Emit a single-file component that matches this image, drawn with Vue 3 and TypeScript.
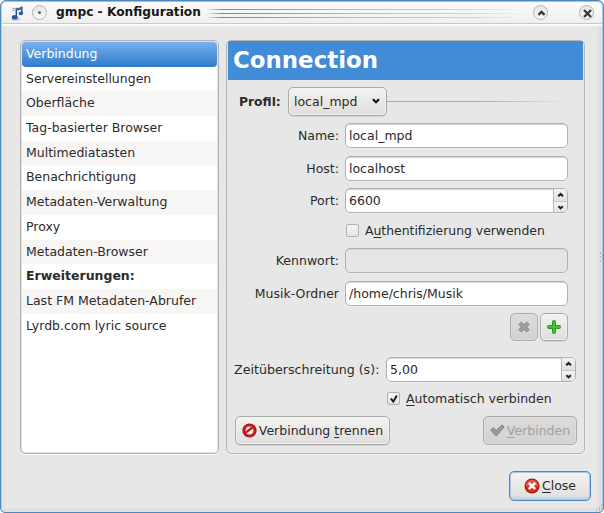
<script setup lang="ts">
import { reactive, ref } from 'vue'

interface Section {
  title: string
  heading?: boolean
}

const sections: Section[] = [
  { title: 'Verbindung' },
  { title: 'Servereinstellungen' },
  { title: 'Oberfläche' },
  { title: 'Tag-basierter Browser' },
  { title: 'Multimediatasten' },
  { title: 'Benachrichtigung' },
  { title: 'Metadaten-Verwaltung' },
  { title: 'Proxy' },
  { title: 'Metadaten-Browser' },
  { title: 'Erweiterungen:', heading: true },
  { title: 'Last FM Metadaten-Abrufer' },
  { title: 'Lyrdb.com lyric source' },
]

const selected = ref(0)
const profile = reactive({
  name: 'local_mpd',
  host: 'localhost',
  port: '6600',
  authenticate: false,
  password: '',
  folder: '/home/chris/Musik',
  timeout: '5,00',
  autoconnect: true,
})

function select(index: number) {
  if (!sections[index].heading) selected.value = index
}
</script>

<template>
  <div class="window">
    <header class="titlebar">
      <svg class="note" width="14" height="16" viewBox="0 0 14 16">
        <ellipse cx="4.5" cy="14.3" rx="4.3" ry="1.3" fill="#b9bfc8" />
        <path d="M5.3 12.5V3.2M10.8 8V2" fill="none" stroke="#294c80" stroke-width="1.4" />
        <path d="M4.7 2.6q3.2 1.2 6.6-1.9v3q-3.4 2.6-6.6 1.4z" fill="#3c68a3" />
        <path d="M.8 3.2l3 .5M1.2 5.4h2.6" stroke="#8fa6c6" />
        <ellipse cx="3.8" cy="12.3" rx="2.9" ry="2.2" fill="#2c5697" />
        <ellipse cx="9.9" cy="8.4" rx="2.2" ry="1.8" fill="#2c5697" />
      </svg>
      <span class="round menu"><i></i></span>
      <span class="caption">gmpc - Konfiguration</span>
      <span class="stripes"><i></i><i></i><i></i></span>
      <span class="round shade">
        <svg width="15" height="15" viewBox="0 0 15 15"><path d="M4.4 8.8l3.1-3 3.1 3" /></svg>
      </span>
      <span class="round">
        <svg width="15" height="15" viewBox="0 0 15 15"><path d="M4 4l7 7m0-7l-7 7" /></svg>
      </span>
    </header>

    <main class="content">
      <ul class="list">
        <li
          v-for="(section, index) in sections"
          :key="section.title"
          :class="{ active: index === selected, heading: section.heading }"
          @click="select(index)"
        ><span>{{ section.title }}</span></li>
      </ul>

      <section class="panel">
        <h1>Connection</h1>
        <div class="row profile">
          <b>Profil:</b>
          <button class="button combo">
            <span>local_mpd</span>
            <svg width="8" height="6" viewBox="0 0 8 6"><path d="M1 1.2l3 3 3-3" /></svg>
          </button>
          <i class="rule"></i>
        </div>

        <div class="form">
          <label for="name">Name:</label>
          <input id="name" v-model="profile.name" class="field" />
          <label for="host">Host:</label>
          <input id="host" v-model="profile.host" class="field" />
          <label for="port">Port:</label>
          <div class="spin">
            <input id="port" v-model="profile.port" class="field" />
            <div class="steps">
              <svg viewBox="0 0 13 12"><path d="M4.2 7.3l2.4-2.2L9 7.3" /></svg>
              <svg viewBox="0 0 13 12"><path d="M4.2 4.7l2.4 2.2L9 4.7" /></svg>
            </div>
          </div>
          <span></span>
          <div class="check auth" @click="profile.authenticate = !profile.authenticate">
            <span class="box">
              <svg v-if="profile.authenticate" viewBox="0 0 13 13"><path d="M3 6l2.7 3.4L9.6 2.8" /></svg>
            </span>
            <span>A<u>u</u>thentifizierung verwenden</span>
          </div>
          <label for="password">Kennwort:</label>
          <input id="password" v-model="profile.password" class="field" type="password" disabled />
          <label for="folder">Musik-Ordner</label>
          <input id="folder" v-model="profile.folder" class="field" />
        </div>

        <div class="row tools">
          <button class="button tool" disabled>
            <svg width="14" height="14" viewBox="0 0 14 14">
              <path d="M2.7 2.9l8.6 8.2m0-8.2l-8.6 8.2" fill="none" stroke="#8b8b8b" stroke-width="4.2" />
              <path d="M3.2 3.4l7.6 7.2m0-7.2l-7.6 7.2" fill="none" stroke="#a0a0a0" stroke-width="2.2" />
            </svg>
          </button>
          <button class="button tool">
            <svg width="14" height="14" viewBox="0 0 14 14">
              <path d="M7 2v10M2 7h10" fill="none" stroke="#2a9a20" stroke-width="4" stroke-linecap="round" />
              <path d="M7 2v10M2 7h10" fill="none" stroke="#46c23a" stroke-width="2" stroke-linecap="round" />
            </svg>
          </button>
        </div>

        <div class="row timeout">
          <label for="timeout">Zeitüberschreitung (s):</label>
          <div class="spin">
            <input id="timeout" v-model="profile.timeout" class="field" />
            <div class="steps">
              <svg viewBox="0 0 13 12"><path d="M4.2 7.3l2.4-2.2L9 7.3" /></svg>
              <svg viewBox="0 0 13 12"><path d="M4.2 4.7l2.4 2.2L9 4.7" /></svg>
            </div>
          </div>
        </div>

        <div class="check auto" @click="profile.autoconnect = !profile.autoconnect">
          <span class="box">
            <svg v-if="profile.autoconnect" viewBox="0 0 13 13"><path d="M3 6l2.7 3.4L9.6 2.8" /></svg>
          </span>
          <span><u>A</u>utomatisch verbinden</span>
        </div>

        <div class="row actions">
          <button class="button disconnect">
            <svg width="15" height="15" viewBox="0 0 15 15">
              <circle cx="7.5" cy="7.5" r="7.1" fill="#9c1414" />
              <circle cx="7.5" cy="7.5" r="6.1" fill="#c62222" />
              <circle cx="7.5" cy="7.5" r="3.9" fill="#f3e6e6" />
              <path d="M3 10.2l8.2-6.3" stroke="#bd1c1c" stroke-width="2.2" />
            </svg>
            <span>Verbindung <u>t</u>rennen</span>
          </button>
          <button class="button connect" disabled>
            <svg width="15" height="13" viewBox="0 0 15 13">
              <path d="M.8 6.2l2.4-2.4 3 2.7L12 1l2.2 2-8 9z" fill="#9c9c9c" stroke="#7f7f7f" />
            </svg>
            <span><u>V</u>erbinden</span>
          </button>
        </div>
      </section>
    </main>

    <footer class="footer">
      <button class="button close">
        <svg width="16" height="16" viewBox="0 0 16 16">
          <circle cx="8" cy="8" r="7.5" fill="#a51208" />
          <circle cx="8" cy="8" r="6.4" fill="#d52a17" />
          <path d="M1.7 8a6.3 6.3 0 0 1 12.6 0q-6 1-12.6 0z" fill="#dd5b4c" />
          <path d="M4.8 4.8l6.4 6.4m0-6.4l-6.4 6.4" stroke="#fff4e8" stroke-width="2.6" />
        </svg>
        <span><u>C</u>lose</span>
      </button>
    </footer>
    <svg class="grip side" width="4" height="10" viewBox="0 0 4 10"><path d="M1 1h1M3 3h1M1 5h1M3 7h1M1 9h1" /></svg>
    <svg class="grip corner" width="8" height="8" viewBox="0 0 8 8"><path d="M6 1h1M4 4h1M6 4h1M1 6h1M4 6h1" /></svg>
  </div>
</template>

<style>
body {
  background: #fff;
}
</style>

<style scoped>
* {
  box-sizing: border-box;
}
.window {
  position: relative;
  width: 604px;
  height: 513px;
  display: flex;
  flex-direction: column;
  overflow: hidden;
  border: 1px solid #4c87bd;
  border-radius: 6px 6px 5px 5px;
  background: #e7e7e7;
  box-shadow: inset 1px 0 #b9d2ea, inset -1px 0 #a9c9e8, inset 0 1px #9fc0df, inset -5px -4px #e0e0e0, inset 4px 0 #e2e3e6;
  color: #2b2b2b;
  font-family: "DejaVu Sans", sans-serif;
  font-size: 12.5px;
}
.titlebar {
  flex: none;
  height: 24px;
  display: flex;
  align-items: center;
  padding: 0 8px 2px 9px;
  margin: 1px 1px 0;
  border-radius: 5px 5px 0 0;
  border-bottom: 2px solid #fafafa;
  box-shadow: inset 0 -1px #c9c9c9;
  background: linear-gradient(#fcfcfc, #eeeeee);
}
.note {
  margin-top: 1px;
}
.round {
  width: 15px;
  height: 15px;
  border: 1px solid #b5b5b5;
  border-radius: 50%;
  background: linear-gradient(#e6e6e6, #fafafa);
  display: grid;
  place-items: center;
}
.round svg {
  width: 15px;
  height: 15px;
}
.round path {
  fill: none;
  stroke: #3b3934;
  stroke-width: 2.3;
}
.menu {
  margin-left: 7px;
}
.menu i {
  width: 3px;
  height: 3px;
  border-radius: 50%;
  background: #686868;
}
.caption {
  margin-left: 9px;
  width: 145px;
  white-space: nowrap;
  font-weight: bold;
  font-size: 12.2px;
  color: #171717;
}
.stripes {
  flex: 1;
  display: grid;
  grid-template-rows: 1px 1px 1px;
  gap: 3px;
  height: 9px;
  margin: 3px 12px 0 5px;
}
.stripes i {
  height: 1px;
  background: linear-gradient(90deg, #f6f6f6, #4b95da 5%, #9fc5e8 50%, #c3d8ec 85%, #f4f4f4);
}
.shade {
  margin-right: 31px;
}
.content {
  display: flex;
  gap: 7px;
  margin: 14px 0 0 19px;
  height: 414px;
}
.list {
  width: 199px;
  height: 414px;
  margin: 0;
  padding: 1px 1px 0;
  list-style: none;
  border: 1px solid #b4b4b4;
  border-radius: 5px;
  background: #fff;
  overflow: hidden;
  box-shadow: 0 1px #f8f8f8, inset 0 0 0 1px #dedede;
}
.list li {
  height: 24.7px;
  padding-left: 4px;
  line-height: 23.6px;
  white-space: nowrap;
}
.list li:nth-child(odd) {
  background: #f7f6f5;
}
.list li.active {
  border-radius: 4px;
  background: linear-gradient(#75b1f0, #307bc6);
  color: #fff;
}
.list li.heading {
  font-weight: bold;
}
.panel {
  width: 359px;
  height: 414px;
  border: 1px solid #b4b4b4;
  border-radius: 5px;
  overflow: hidden;
  box-shadow: 0 1px #f5f5f5, 1px 0 #eee;
}
h1 {
  height: 39px;
  margin: 0 1px;
  padding-left: 5px;
  background: #418bd7;
  color: #fff;
  font-size: 22.9px;
  line-height: 38px;
}
.row {
  display: flex;
  align-items: center;
}
.profile {
  height: 29px;
  margin: 7px 14px 0 12px;
}
.profile b {
  width: 49px;
  font-size: 12.3px;
}
.button {
  display: flex;
  align-items: center;
  justify-content: center;
  padding: 0;
  border: 1px solid #aaaaaa;
  border-radius: 5px;
  background: linear-gradient(#f3f3f2, #dfdedc);
  box-shadow: inset 0 0 0 1px #f2f2f2, 0 1px #d3d3d3;
  color: inherit;
  font: inherit;
  white-space: nowrap;
}
.button:disabled {
  background: linear-gradient(#dddcdb, #d3d2d0);
  box-shadow: inset 0 0 0 1px #dddddd, 0 1px #eeeeee;
  color: #a0a0a0;
}
.combo {
  width: 99px;
  height: 29px;
  justify-content: space-between;
  padding: 0 6px 1px 5px;
}
.combo path {
  fill: none;
  stroke: #111;
  stroke-width: 2.2;
}
.rule {
  flex: 1;
  height: 1px;
  background: linear-gradient(90deg, #aaa 50%, transparent);
}
.form {
  display: grid;
  grid-template-columns: 112px 223px;
  grid-template-rows: 25px 25px 25px 20px 25px 25px;
  row-gap: 7.6px;
  column-gap: 6px;
  margin-top: 7px;
  align-items: center;
}
.form label {
  text-align: right;
}
.field {
  width: 100%;
  height: 25px;
  padding: 0 4px 0 3px;
  border: 1px solid #b0b0b0;
  border-radius: 5px;
  outline: none;
  background: #fff;
  box-shadow: inset 0 1px #d5d5d5, 0 1px #f1f1f1;
  color: inherit;
  font: inherit;
}
.field:disabled {
  background: #e5e5e5;
}
.spin {
  position: relative;
  width: 100%;
}
.spin .field {
  display: block;
}
.steps {
  position: absolute;
  top: 1px;
  right: 1px;
  width: 14px;
  height: 23px;
  display: grid;
  grid-template-rows: 12px 11px;
  overflow: hidden;
  border-left: 1px solid #b8b8b8;
  border-radius: 0 4px 4px 0;
}
.steps svg {
  width: 13px;
  height: 12px;
  background: linear-gradient(#f4f4f4, #e1e0df);
}
.steps svg + svg {
  border-top: 1px solid #c6c6c6;
}
.steps path {
  fill: none;
  stroke: #222;
  stroke-width: 2.2;
}
.check {
  display: flex;
  align-items: center;
  gap: 6px;
}
.auth {
  padding-left: 1px;
  font-size: 12.4px;
}
.box {
  width: 13px;
  height: 13px;
  border: 1px solid #b2b2b2;
  border-radius: 2px;
  background: linear-gradient(#f5f5f5, #e5e4e2);
}
.box svg {
  display: block;
  width: 12px;
  height: 12px;
}
.box path {
  fill: none;
  stroke: #161616;
  stroke-width: 2;
}
u {
  text-decoration-thickness: 1px;
  text-underline-offset: 2px;
}
.tools {
  justify-content: flex-end;
  gap: 2px;
  margin: 7px 16px 0 0;
}
.tool {
  width: 28px;
  height: 28px;
}
.timeout {
  gap: 5px;
  margin: 16px 8px 0 7px;
}
.timeout label {
  width: 147px;
  white-space: nowrap;
  font-size: 12.65px;
}
.timeout .spin {
  width: 190px;
}
.auto {
  margin: 9px 0 0 160px;
  height: 16px;
}
.actions {
  justify-content: space-between;
  margin: 9px 7px 0 8px;
}
.disconnect {
  width: 155px;
  height: 29px;
  gap: 2px;
}
.connect {
  width: 94px;
  height: 29px;
  gap: 2px;
}
.footer {
  display: flex;
  justify-content: flex-end;
  margin: 17px 12px 0 0;
}
.close {
  width: 82px;
  height: 30px;
  gap: 2px;
  border-color: #5586b8;
  padding-bottom: 1px;
  box-shadow: inset 0 0 0 1px #a7c7e8, inset 0 -3px 2px #c0d7ed;
}
.grip {
  position: absolute;
  right: 0;
  fill: none;
  stroke: #8f9298;
}
.side {
  top: 251px;
}
.corner {
  bottom: 0;
}
</style>
